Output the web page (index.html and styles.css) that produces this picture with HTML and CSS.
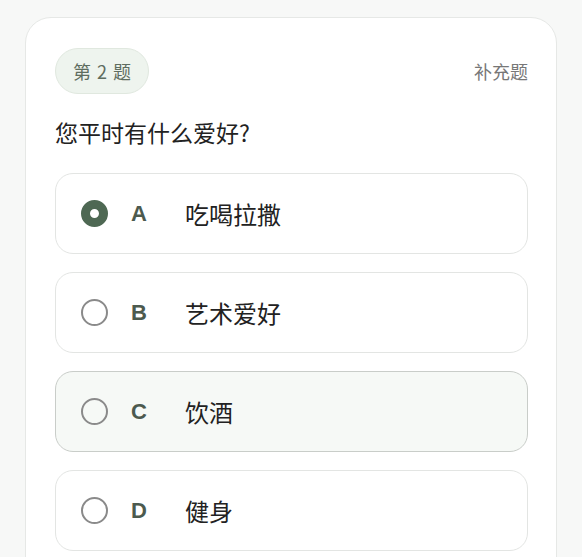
FILE: index.html
```html
<!DOCTYPE html>
<html lang="zh-CN">

<head>
    <meta charset="UTF-8">
    <meta name="viewport" content="width=device-width, initial-scale=1.0">
    <title>第 2 题</title>
    <link rel="stylesheet" href="styles.css">
</head>

<body>
    <div class="the-cau-hoi">
        <div class="dau-the">
            <span class="so-cau">第 2 题</span>
            <span class="loai-cau">补充题</span>
        </div>
        <div class="noi-dung">您平时有什么爱好?</div>

        <div class="ds-lua-chon">
            <div class="lua-chon da-chon">
                <span class="nut-chon"></span>
                <span class="chu-cai">A</span>
                <span class="van-ban">吃喝拉撒</span>
            </div>
            <div class="lua-chon">
                <span class="nut-chon"></span>
                <span class="chu-cai">B</span>
                <span class="van-ban">艺术爱好</span>
            </div>
            <div class="lua-chon dang-tro">
                <span class="nut-chon"></span>
                <span class="chu-cai">C</span>
                <span class="van-ban">饮酒</span>
            </div>
            <div class="lua-chon">
                <span class="nut-chon"></span>
                <span class="chu-cai">D</span>
                <span class="van-ban">健身</span>
            </div>
        </div>
    </div>
</body>

</html>
```

FILE: styles.css
```css
* {
    box-sizing: border-box;
    padding: 0;
    margin: 0;
}

body {
    background-color: #f7f8f7;
    color: #222;
    font-family: "Noto Sans CJK SC", "Noto Sans", sans-serif;
    font-size: 16px;
    height: 557px;
    overflow: hidden;
}

.the-cau-hoi {
    margin: 17px 25px 0 25px;
    padding: 30px 28px 40px 29px;
    background-color: #fff;
    border: 1px solid #e6e8e6;
    border-radius: 26px;
}

.dau-the {
    display: flex;
    justify-content: space-between;
    align-items: center;
}

.so-cau {
    display: inline-block;
    height: 46px;
    line-height: 44px;
    padding: 0 17px;
    background-color: #eef4ee;
    border: 1px solid #e0e8df;
    border-radius: 23px;
    color: #5e6d60;
    font-size: 18px;
    word-spacing: 2px;
}

.loai-cau {
    color: #777;
    font-size: 18px;
}

.noi-dung {
    margin-top: 23px;
    font-size: 23px;
    line-height: 30px;
    color: #222;
}

.ds-lua-chon {
    margin-top: 26px;
    display: flex;
    flex-direction: column;
    gap: 18px;
}

.lua-chon {
    display: flex;
    align-items: center;
    height: 81px;
    padding: 0 25px;
    border: 1px solid #e3e5e3;
    border-radius: 18px;
    background-color: #fff;
}

.lua-chon.dang-tro {
    background-color: #f6f9f6;
    border-color: #c9cdc9;
}

.nut-chon {
    width: 27px;
    height: 27px;
    border: 2px solid #8a8a8a;
    border-radius: 50%;
    flex-shrink: 0;
}

.da-chon .nut-chon {
    border: 9px solid #4e6853;
    background-color: #fff;
}

.chu-cai {
    width: 54px;
    margin-left: 23px;
    font-family: "Liberation Sans", Arial, sans-serif;
    font-weight: bold;
    font-size: 22px;
    color: #4c5a4e;
}

.van-ban {
    font-size: 24px;
    color: #222;
}
```
